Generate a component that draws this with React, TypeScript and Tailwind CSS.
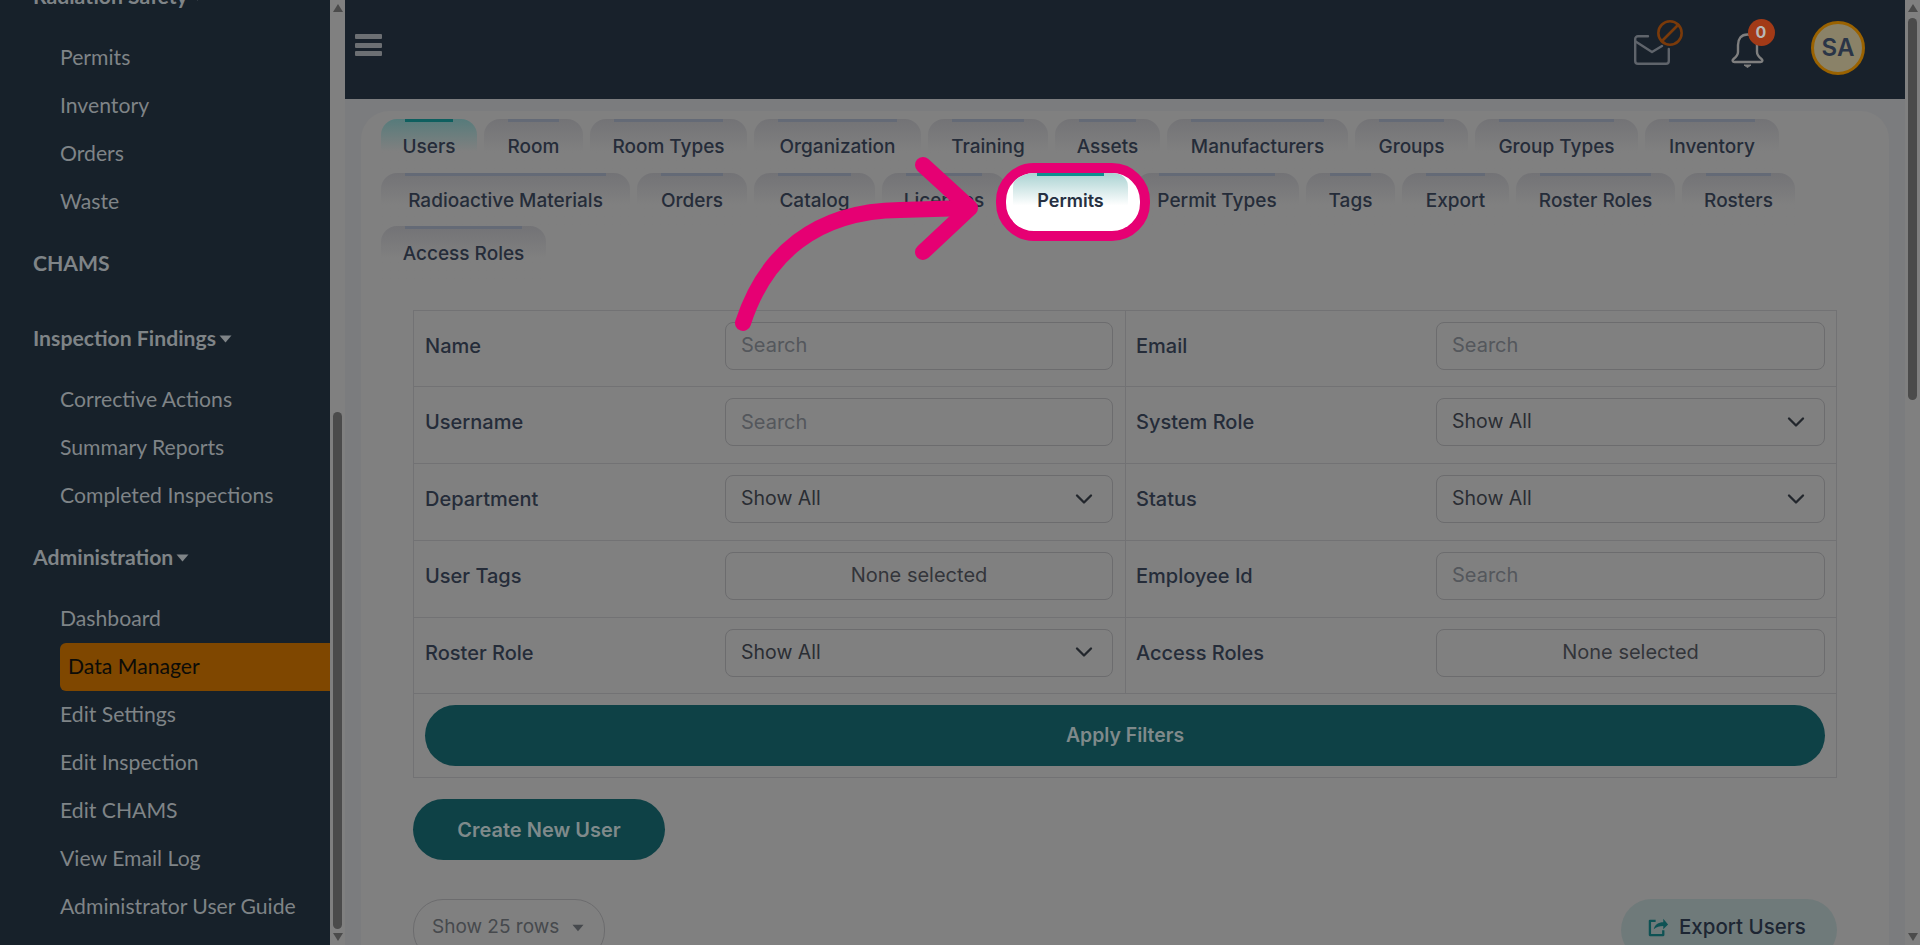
import * as React from "react"
import { ChevronDown, Ban } from "lucide-react"

const uiFont = "font-['Inter','Noto_Sans',sans-serif]"

const tabs = [
  { label: "Users", w: "w-[96px]", active: true },
  { label: "Room", w: "w-[99px]" },
  { label: "Room Types", w: "w-[157px]" },
  { label: "Organization", w: "w-[167px]" },
  { label: "Training", w: "w-[120px]" },
  { label: "Assets", w: "w-[105px]" },
  { label: "Manufacturers", w: "w-[181px]" },
  { label: "Groups", w: "w-[113px]" },
  { label: "Group Types", w: "w-[163px]" },
  { label: "Inventory", w: "w-[134px]" },
  { label: "Radioactive Materials", w: "w-[249px]" },
  { label: "Orders", w: "w-[110px]" },
  { label: "Catalog", w: "w-[121px]" },
  { label: "Licenses", w: "w-[124px]" },
  { label: "Permits", w: "w-[115px]", focus: true },
  { label: "Permit Types", w: "w-[164px]" },
  { label: "Tags", w: "w-[89px]" },
  { label: "Export", w: "w-[107px]" },
  { label: "Roster Roles", w: "w-[159px]" },
  { label: "Rosters", w: "w-[113px]" },
  { label: "Access Roles", w: "w-[165px]" },
]

type Field = { label: string; kind: "search" | "select" | "multi" }

const rows: [Field, Field][] = [
  [{ label: "Name", kind: "search" }, { label: "Email", kind: "search" }],
  [{ label: "Username", kind: "search" }, { label: "System Role", kind: "select" }],
  [{ label: "Department", kind: "select" }, { label: "Status", kind: "select" }],
  [{ label: "User Tags", kind: "multi" }, { label: "Employee Id", kind: "search" }],
  [{ label: "Roster Role", kind: "select" }, { label: "Access Roles", kind: "multi" }],
]

function Caret({ className }: { className: string }) {
  return (
    <svg viewBox="0 0 13 8" className={className} fill="currentColor">
      <path d="M0.5 0.5h12L6.5 7.5z" />
    </svg>
  )
}

function NavItem({ label }: { label: string }) {
  return <div className="h-12 pl-[60px] flex items-center">{label}</div>
}

function NavHead({ label, caret }: { label: string; caret?: boolean }) {
  return (
    <div className="h-12 my-[13px] pl-[33px] flex items-center gap-[3px] font-bold">
      {label}
      {caret && <Caret className="w-[13px] h-2" />}
    </div>
  )
}

function Sidebar() {
  return (
    <aside className="w-[330px] shrink-0 bg-[#17212a] text-[#7f8487] text-[21.2px] overflow-hidden font-['Lato',sans-serif]">
      <div className="-mt-[40px]">
        <NavHead label="Radiation Safety" caret />
        <NavItem label="Permits" />
        <NavItem label="Inventory" />
        <NavItem label="Orders" />
        <NavItem label="Waste" />
        <div className="h-[1px]" />
        <NavHead label="CHAMS" />
        <div className="h-[1px] mt-[13px]" />
        <NavHead label="Inspection Findings" caret />
        <NavItem label="Corrective Actions" />
        <NavItem label="Summary Reports" />
        <NavItem label="Completed Inspections" />
        <div className="h-[1px]" />
        <NavHead label="Administration" caret />
        <NavItem label="Dashboard" />
        <div className="ml-[60px] h-12 pl-[8px] flex items-center bg-[#7f4700] text-[#0c0c08] rounded-l-[6px]">Data Manager</div>
        <NavItem label="Edit Settings" />
        <NavItem label="Edit Inspection" />
        <NavItem label="Edit CHAMS" />
        <NavItem label="View Email Log" />
        <NavItem label="Administrator User Guide" />
      </div>
    </aside>
  )
}

function Scrollbar({ thumb }: { thumb: string }) {
  return (
    <div className="w-[15px] shrink-0 bg-[#808080] flex flex-col items-center text-[#4b4b4b]">
      <svg viewBox="0 0 10 8" className="w-[10px] h-2 mt-1 shrink-0" fill="currentColor">
        <path d="M5 0l5 8H0z" />
      </svg>
      <div className={`w-[9px] rounded-full bg-[#4b4b4b] ${thumb}`} />
      <div className="flex-1" />
      <svg viewBox="0 0 10 8" className="w-[10px] h-2 mb-1 shrink-0" fill="currentColor">
        <path d="M5 8L0 0h10z" />
      </svg>
    </div>
  )
}

function Topbar() {
  return (
    <header className="h-[99px] shrink-0 bg-[#18212b] flex items-start">
      <div className="ml-[10px] mt-[34px] w-[27px] flex flex-col gap-[3.5px]">
        <div className="h-[5px] rounded-[1px] bg-[#6c6f73]" />
        <div className="h-[5px] rounded-[1px] bg-[#6c6f73]" />
        <div className="h-[5px] rounded-[1px] bg-[#6c6f73]" />
      </div>
      <div className="flex-1" />
      <div className="relative w-9 h-[30px] mt-[35px]">
        <svg viewBox="0 0 36 30" className="w-9 h-[30px]" fill="none" stroke="#5f646b" strokeWidth="2.4" strokeLinecap="round" strokeLinejoin="round">
          <path d="M14 1.2H4a2.8 2.800 0 0 0-2.800 2.800v22a2.800 2.800 0 0 0 2.800 2.800h28a2.800 2.800 0 0 0 2.800-2.800V14" />
          <path d="M1.600 6.500L18 17l10-6" />
        </svg>
        <Ban className="absolute left-[22px] -top-[16px] w-7 h-7 text-[#7a3a0a] -scale-x-100" strokeWidth={2.2} />
      </div>
      <div className="relative w-[33px] h-[35px] mt-[33px] ml-[61px]">
        <svg viewBox="0 0 33 35" className="w-[33px] h-[35px]" fill="none" stroke="#7f7f7f" strokeWidth="2.400" strokeLinejoin="round">
          <path d="M16.500 1.500C10 1.500 7 6 7 12v7c0 3-2 5-4.500 7-1.500 1.200-1 3 1 3h26c2 0 2.500-1.800 1-3-2.500-2-4.500-4-4.500-7v-7C26 6 23 1.500 16.500 1.500z" />
          <path d="M13 32h7l-3.500 2.500z" fill="#7f7f7f" strokeWidth="1" />
        </svg>
        <div className={`absolute left-[16.500px] -top-[14.500px] w-[27px] h-[27px] rounded-full bg-[#a23a17] text-[#b8b8b8] text-[16px] font-bold flex items-center justify-center ${uiFont}`}>0</div>
      </div>
      <div className={`mt-[21px] ml-[47px] mr-[40px] w-[54px] h-[54px] rounded-full bg-[#8a8268] border-[3.5px] border-[#9a6200] text-[#2a3547] text-[24px] font-semibold flex items-center justify-center ${uiFont}`}>SA</div>
    </header>
  )
}

function Tab({ label, w, active, focus }: { label: string; w: string; active?: boolean; focus?: boolean }) {
  if (focus) {
    return (
      <div className={`relative z-10 ${w} h-[53.5px]`}>
        <div className="absolute -left-[17px] -top-[10px] w-[154px] h-[78px] rounded-[38px] border-[10px] border-[#e60073] bg-white overflow-hidden">
          <div className="ml-[7px] w-[115px] h-[54px] rounded-t-[14px] bg-gradient-to-b from-[#a9d2d2] to-white to-60%" />
        </div>
        <div className="relative h-full flex items-start justify-center pt-[14px] text-[#263041] font-semibold text-[18px]">
          <div className="absolute left-[24px] right-[24px] top-0 h-[3px] bg-[#0e8f8f]" />
          {label}
        </div>
      </div>
    )
  }
  return (
    <div className={`relative ${w} h-[53.5px] flex items-start justify-center pt-[14px] rounded-t-[16px] text-[#252c39] font-medium text-[19px] whitespace-nowrap bg-gradient-to-b ${active ? "from-[#567b7b] to-[#808080] to-60%" : "from-[#737376] to-[#808080] to-60%"}`}>
      <div className={`absolute left-[24px] right-[24px] top-0 h-[3px] ${active ? "bg-[#0e5f5f]" : "bg-[#646a76]"}`} />
      {label}
    </div>
  )
}

function FieldControl({ field, w }: { field: Field; w: string }) {
  const box = `${w} h-12 rounded-[8px] border border-[#6c6c6e] flex items-center`
  if (field.kind === "search") {
    return <div className={`${box} pb-[1px] pl-[15px] text-[20px] text-[#54575c]`}>Search</div>
  }
  if (field.kind === "select") {
    return (
      <div className={`${box} pb-[1px] pl-[15px] pr-[14px] justify-between text-[19.5px] text-[#2a2d33]`}>
        Show All
        <ChevronDown className="w-7 h-7 text-[#22262c]" strokeWidth={2} />
      </div>
    )
  }
  return <div className={`${box} pb-[1px] justify-center text-[20px] text-[#33353a]`}>None selected</div>
}

function FilterTable() {
  return (
    <div className="w-[1424px] border border-[#727274] text-[#252c39]">
      {rows.map(([left, right]) => (
        <div key={left.label} className="h-[76.8px] flex border-b border-[#727274]">
          <div className="w-[712px] flex items-start pt-[11px] pl-[11px] border-r border-[#727274]">
            <div className="w-[300px] h-12 flex items-center font-medium text-[20px]">{left.label}</div>
            <FieldControl field={left} w="w-[388px]" />
          </div>
          <div className="flex items-start pt-[11px] pl-[10px]">
            <div className="w-[300px] h-12 flex items-center font-medium text-[20px]">{right.label}</div>
            <FieldControl field={right} w="w-[389px]" />
          </div>
        </div>
      ))}
      <div className="px-[11px] py-[11px]">
        <div className="h-[61px] rounded-full bg-[#0e4146] text-[#7f8a8b] font-semibold text-[19.4px] flex items-center justify-center">Apply Filters</div>
      </div>
    </div>
  )
}

export default function App() {
  return (
    <div className={`relative h-[945px] w-[1920px] flex overflow-hidden bg-[#7b7c7e] ${uiFont}`}>
      <Sidebar />
      <Scrollbar thumb="h-[517px] mt-[400px]" />
      <main className="flex-1 flex flex-col min-w-0">
        <Topbar />
        <section className="mt-[12px] mx-4 flex-1 rounded-t-[28px] bg-[#808080] pl-[20px] pt-[8px]">
          <div className="w-[1490px] flex flex-wrap gap-x-[7px]">
            {tabs.map((t) => (
              <Tab key={t.label} {...t} />
            ))}
          </div>
          <div className="ml-[32px] mt-[30px]">
            <FilterTable />
            <div className="mt-[21px] w-[252px] h-[61px] rounded-full bg-[#0e4146] text-[#7f8a8b] font-semibold text-[20px] flex items-center justify-center">Create New User</div>
            <div className="mt-[39px] w-[1424px] flex items-start justify-between">
              <div className="w-[192px] h-[62px] rounded-[30px] border border-[#6c6c6e] pl-[18px] pt-[13px] flex items-start gap-[13px] text-[#46494d] text-[19px]">
                Show 25 rows
                <Caret className="w-[12px] h-2 mt-[11px]" />
              </div>
              <div className="w-[216px] h-[62px] rounded-[31px] bg-[#6f7a7a] pl-[27px] pt-[13px] flex items-start gap-[10px] text-[#1d2633] font-medium text-[20.5px]">
                <svg viewBox="0 0 22 22" className="w-[21px] h-[21px] mt-[4px] text-[#0e5254]" fill="none" stroke="currentColor" strokeWidth="2.400" strokeLinejoin="round">
                  <path d="M8 5H2v15h14v-5" />
                  <path d="M6 14c1-5 5-7.500 10-7.500V3l5 6-5 5v-3.500c-4 0-7 1-10 3.500z" fill="currentColor" stroke="none" />
                </svg>
                Export Users
              </div>
            </div>
          </div>
        </section>
      </main>
      <Scrollbar thumb="h-[382px] mt-[6px]" />
      <svg className="absolute inset-0 w-[1920px] h-[945px] pointer-events-none" fill="none" stroke="#e60073" strokeWidth="16" strokeLinecap="round" strokeLinejoin="round">
        <path d="M743 323C765 255 815 211 900 210L968 208" />
        <path d="M923 165L970 208L923 252" />
      </svg>
    </div>
  )
}
